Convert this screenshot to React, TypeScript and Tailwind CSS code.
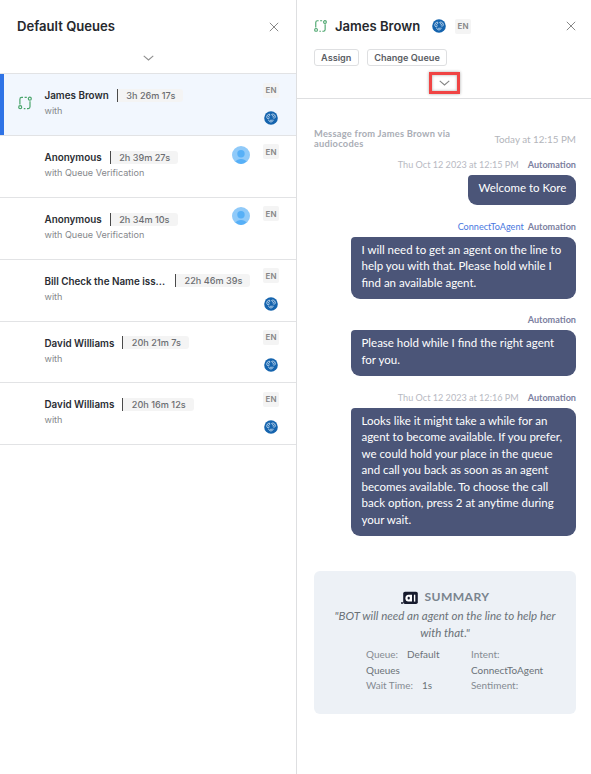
import React from "react";

const inter = "font-['Inter','Liberation_Sans',sans-serif]";
const lato = "font-['Lato','Liberation_Sans',sans-serif]";

function Close() {
  return (
    <svg className="h-[10px] w-[10px]" viewBox="0 0 10 10" fill="none" stroke="#7a7a7a" strokeWidth="0.9">
      <path d="M0.8 0.8 9.2 9.2M9.2 0.8 0.8 9.2" />
    </svg>
  );
}

function Chevron({ className }: { className: string }) {
  return (
    <svg className={className} viewBox="0 0 12 6" fill="none" stroke="currentColor" strokeWidth="1.2">
      <path d="M0.8 0.6 6 5.2 11.2 0.6" />
    </svg>
  );
}

function FlowIcon({ className }: { className: string }) {
  return (
    <svg className={className} viewBox="0 0 14 14" fill="none" stroke="#4aa56c" strokeWidth="1.2">
      <path d="M1.9 8.6V3.2Q1.9 1.4 3.7 1.4H5M6.6 1.4H8.8" />
      <path d="M12 5.2V10.8Q12 12.6 10.2 12.6H9M7.4 12.6H5.8" />
      <circle cx="11.8" cy="2.7" r="1.5" />
      <circle cx="2.2" cy="11.2" r="1.5" />
    </svg>
  );
}

function VoiceIcon({ className }: { className: string }) {
  return (
    <svg className={className} viewBox="0 0 14 14" fill="none">
      <circle cx="7" cy="7" r="6.8" fill="#1564ae" />
      <g stroke="#c6dbef" strokeWidth="0.95" strokeLinecap="round">
        <path d="M5.6 3.2C3.6 3 2.5 4.8 2.9 6.6C3.2 8 4.5 8.2 5.3 7.2" />
        <path d="M5.9 4.2C4.7 4.4 4.3 5.4 4.7 6.1" />
        <path d="M7.7 3.3C9 2.6 10.8 3.4 11.2 5.1C11.4 6.4 10.8 7.2 10 7.5" />
        <path d="M8.3 4.6C9.2 4.4 9.7 5.1 9.3 6.2" />
        <path d="M4.7 9.2C5.1 11.3 8.2 11.8 9.2 9.3M6.2 9.1C6.8 9.9 7.6 9.8 7.9 9" />
      </g>
    </svg>
  );
}

function Avatar() {
  return (
    <svg className="h-[18px] w-[18px]" viewBox="0 0 18 18">
      <circle cx="9" cy="9" r="9" fill="#90caf9" />
      <circle cx="9" cy="7.8" r="3.7" fill="#57b0f7" />
      <path d="M3.6 15.6Q5 12.9 9 12.9T14.4 15.6Q12.2 18 9 18T3.6 15.6Z" fill="#57b0f7" />
    </svg>
  );
}

function Lang() {
  return (
    <span className="flex h-[15px] w-4 items-center justify-center rounded-[2px] bg-[#f4f4f4] text-[8px] leading-none font-semibold text-[#858585]">
      EN
    </span>
  );
}

type Item = { name: string; time: string; sub: string; person?: boolean; active?: boolean };

const queue: Item[] = [
  { name: "James Brown", time: "3h 26m 17s", sub: "with", active: true },
  { name: "Anonymous", time: "2h 39m 27s", sub: "with Queue Verification", person: true },
  { name: "Anonymous", time: "2h 34m 10s", sub: "with Queue Verification", person: true },
  { name: "Bill Check the Name iss...", time: "22h 46m 39s", sub: "with" },
  { name: "David Williams", time: "20h 21m 7s", sub: "with" },
  { name: "David Williams", time: "20h 16m 12s", sub: "with" },
];

function QueueRow({ item }: { item: Item }) {
  return (
    <div
      className={`flex h-[61.8px] border-b border-[#e2e3e5] ${
        item.active ? "bg-[#f2f7fe] shadow-[inset_4px_0_0_#2f73e6]" : ""
      }`}
    >
      <div className="w-[44.5px] shrink-0 pt-[21.6px] pl-[18px]">
        {item.active && <FlowIcon className="h-[14px] w-[14px]" />}
      </div>
      <div className="flex-1 pt-[14.1px]">
        <div className="flex items-center">
          <span className="text-[9.85px] leading-[14px] font-semibold whitespace-nowrap text-[#2a2d33]">{item.name}</span>
          <span
            className={`flex h-[13px] items-center rounded-r-[3px] border-l border-[#4a4a4a] bg-[#f4f4f4] pr-2 pl-[8.5px] text-[9.15px] leading-none font-medium whitespace-nowrap text-[#6c6e72] ${
              item.name.endsWith("...") ? "ml-[10px]" : "ml-2"
            }`}
          >
            {item.time}
          </span>
        </div>
        <div className="mt-[2px] text-[9.05px] leading-[13px] text-[#85878b]">{item.sub}</div>
      </div>
      {item.person && (
        <div className="mr-[13.5px] pt-[9.4px]">
          <Avatar />
        </div>
      )}
      <div className="flex w-[33px] shrink-0 flex-col pt-[8.3px]">
        <Lang />
        {!item.person && <VoiceIcon className="mt-[13.5px] ml-[1px] h-[14px] w-[14px]" />}
      </div>
    </div>
  );
}

function Meta({ time, intent }: { time?: string; intent?: string }) {
  return (
    <div className="flex h-[11px] items-center justify-end text-[9.1px] leading-[11px] whitespace-nowrap">
      {time && <span className="mr-[9px] text-[#b7b9c2]">{time}</span>}
      {intent && <span className="mr-1 text-[#4a78e0]">{intent}</span>}
      <span className="font-bold text-[#7c80a0]">Automation</span>
    </div>
  );
}

function Bubble({ lines }: { lines: string[] }) {
  return (
    <div
      className={`mt-[5px] ml-auto rounded-[9px] rounded-tl-[4px] bg-[#4b5578] pt-[5px] pb-[8px] pl-[10.5px] text-[11.5px] leading-[16.5px] whitespace-nowrap text-white ${
        lines.length > 1 ? "w-[225px]" : "w-[108px]"
      }`}
    >
      {lines.map((l) => (
        <div key={l}>{l}</div>
      ))}
    </div>
  );
}

function KoreLogo() {
  return (
    <svg className="h-[14px] w-[17px]" viewBox="0 0 17 14" fill="none">
      <circle cx="1" cy="12" r="1" fill="#171b2d" />
      <rect x="2.2" y="0.8" width="14.6" height="12.2" rx="1.8" fill="#171b2d" />
      <path d="M11 10.6H7.4Q4.4 10.3 4.4 7.2T7.6 3.7H11Z" fill="#fff" />
      <rect x="6.6" y="5.7" width="2.2" height="2.9" rx="1" fill="#171b2d" />
      <path d="M13.6 3.7V10.6" stroke="#fff" strokeWidth="1.4" />
    </svg>
  );
}

export default function App() {
  return (
    <div className={`flex h-[774px] w-[591px] overflow-hidden bg-white ${inter}`}>
      <aside className="w-[297px] shrink-0 border-r border-[#dedfe1]">
        <div className="h-[74.4px] border-b border-[#e2e3e5] pt-[17px]">
          <div className="flex items-center justify-between pr-[17px] pl-[17px]">
            <h1 className="text-[13.1px] leading-[19px] font-semibold text-[#26282d]">Default Queues</h1>
            <Close />
          </div>
          <div className="flex justify-center pt-[19px] text-[#8f8f8f]">
            <Chevron className="h-[6px] w-[11px]" />
          </div>
        </div>
        {queue.map((item) => (
          <QueueRow key={item.time} item={item} />
        ))}
      </aside>

      <main className="flex-1">
        <header className="h-[99px] border-b border-[#dedfe1] pt-[16.5px] pr-[15px] pl-[17px]">
          <div className="flex items-center">
            <FlowIcon className="h-[14px] w-[13px]" />
            <h2 className="ml-2 w-[97px] text-[13.05px] leading-[19px] font-semibold whitespace-nowrap text-[#26282d]">
              James Brown
            </h2>
            <VoiceIcon className="h-[14px] w-[14px]" />
            <div className="mr-auto ml-[9px]">
              <Lang />
            </div>
            <Close />
          </div>
          <div className="mt-[13.5px] flex gap-[8.5px] text-[9.15px] leading-none font-semibold text-[#5a5d63]">
            <button className="h-[17px] w-[44.5px] rounded-[3px] border border-[#dedfe1]">Assign</button>
            <button className="h-[17px] w-[80px] rounded-[3px] border border-[#dedfe1]">Change Queue</button>
          </div>
          <div className="mt-[6px] ml-[115px] flex h-[22px] w-[31px] items-center justify-center border-[3px] border-[#f04444] text-[#858585] shadow-[0_0_3px_#00000055,inset_0_0_3px_#00000055]">
            <Chevron className="-mt-px h-[6px] w-[11px]" />
          </div>
        </header>

        <section className={`pr-[15px] pl-[17px] ${lato}`}>
          <div className="flex items-center justify-between pt-[29.5px]">
            <div className="text-[9.3px] leading-[10px] font-bold tracking-[0.25px] text-[#a9adb5]">
              Message from James Brown via
              <br />
              audiocodes
            </div>
            <div className="text-[9.85px] leading-[12px] text-[#b3b5bb]">Today at 12:15 PM</div>
          </div>
          <div className="pt-[10.5px]">
            <Meta time="Thu Oct 12 2023 at 12:15 PM" />
            <Bubble lines={["Welcome to Kore"]} />
          </div>
          <div className="pt-[16px]">
            <Meta intent="ConnectToAgent" />
            <Bubble
              lines={["I will need to get an agent on the line to", "help you with that. Please hold while I", "find an available agent."]}
            />
          </div>
          <div className="pt-[15px]">
            <Meta />
            <Bubble lines={["Please hold while I find the right agent", "for you."]} />
          </div>
          <div className="pt-[15.5px]">
            <Meta time="Thu Oct 12 2023 at 12:16 PM" />
            <Bubble
              lines={[
                "Looks like it might take a while for an",
                "agent to become available. If you prefer,",
                "we could hold your place in the queue",
                "and call you back as soon as an agent",
                "becomes available. To choose the call",
                "back option, press 2 at anytime during",
                "your wait.",
              ]}
            />
          </div>

          <div className="mt-[34.5px] h-[143px] rounded-[6px] bg-[#edf1f6] pt-[18.5px] text-[#6b7178]">
            <div className="flex h-[17px] items-center justify-center gap-[7px]">
              <KoreLogo />
              <span className="text-[12.1px] font-bold tracking-[0.4px] text-[#7a848e]">SUMMARY</span>
            </div>
            <div className="mt-px text-center text-[11.55px] leading-[17px] whitespace-nowrap italic">
              "BOT will need an agent on the line to help her
              <br />
              with that."
            </div>
            <div className="mt-[6px] flex pl-[52px] text-[9.95px] leading-[15.5px]">
              <div className="w-[105px] whitespace-nowrap">
                <div>
                  <span className="mr-[9px] text-[#858b92]">Queue:</span>Default
                </div>
                <div>Queues</div>
                <div>
                  <span className="mr-[9px] text-[#858b92]">Wait Time:</span>1s
                </div>
              </div>
              <div>
                <div className="text-[#858b92]">Intent:</div>
                <div>ConnectToAgent</div>
                <div className="text-[#858b92]">Sentiment:</div>
              </div>
            </div>
          </div>
        </section>
      </main>
    </div>
  );
}
